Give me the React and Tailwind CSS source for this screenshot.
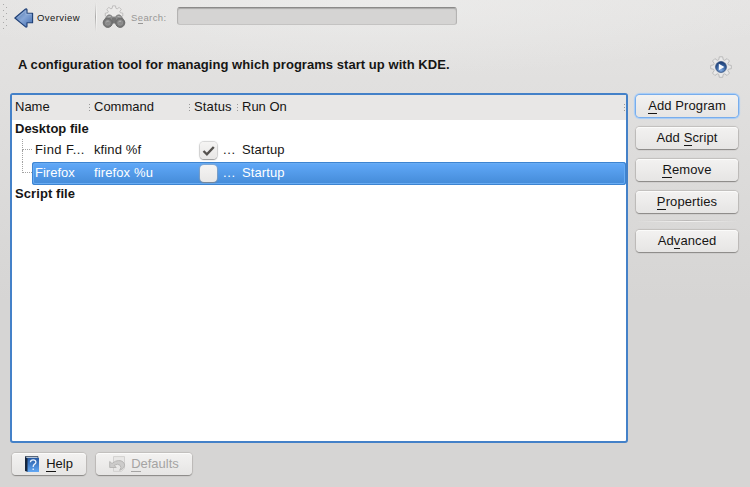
import React from 'react';

const raised =
  'flex items-center justify-center rounded-[4px] bg-gradient-to-b from-[#f3f2f1] to-[#e6e5e4] shadow-[0_1px_1px_#8a8886,0_0_1px_1px_#c0bebc,inset_0_1px_0_#fbfbfa]';

function Key({ children }) {
  return <span className="inline-block h-[15px] border-b border-current leading-[14px]">{children}</span>;
}

function SideButton({ before = '', hot, after, focused, className = '' }) {
  const look = focused
    ? 'flex items-center justify-center rounded-[4px] bg-gradient-to-b from-[#f3f2f1] to-[#e6e5e4] shadow-[0_0_0_1px_#78adec,0_0_1px_2px_#a4cbf8]'
    : raised;
  return (
    <button className={`${look} h-[22px] w-[102px] shrink-0 whitespace-pre leading-[15px] ${className}`}>
      <span className="tracking-[0.1px]">{before}<Key>{hot}</Key>{after}</span>
    </button>
  );
}

function Grip({ className = '' }) {
  return (
    <span className={`flex w-px shrink-0 flex-col gap-[2px] ${className}`}>
      <i className="h-px w-px bg-[#999]" />
      <i className="h-px w-px bg-[#999]" />
      <i className="h-px w-px bg-[#999]" />
    </span>
  );
}

function BackArrow() {
  return (
    <svg width="20" height="20" viewBox="0 0 20 20" className="shrink-0">
      <defs>
        <linearGradient id="arrow" x1="0" y1="0" x2="1" y2="1">
          <stop offset="0" stopColor="#44699f" />
          <stop offset=".5" stopColor="#86a6d6" />
          <stop offset="1" stopColor="#3d68ac" />
        </linearGradient>
      </defs>
      <path d="M.8 10 11.3 1.2c1-.7 1.700-.3 1.700.6v3.400h5.600v9.600H13v3.400c0 .9-.9 1.200-1.700.5z" fill="url(#arrow)" stroke="#1f3f75" strokeWidth="1.1" strokeLinejoin="round" />
      <path d="M3.500 9.600 11.800 2.800v3.500h5.500" fill="none" stroke="#9fb9e0" strokeWidth=".7" />
    </svg>
  );
}

const gearPath =
  'M9.300.8h3.400l.5 2.900 1.500.6 2.400-1.700 2.400 2.400-1.700 2.400.6 1.500 2.900.5v3.300l-2.900.5-.6 1.500 1.700 2.400-2.400 2.400-2.400-1.700-1.500.6-.5 2.900H9.300l-.5-2.900-1.500-.6-2.400 1.700-2.400-2.400 1.700-2.400-.6-1.500-2.900-.5V9.400l2.900-.5.6-1.500L2.500 5l2.400-2.400 2.400 1.700 1.500-.6z';

function SearchIcon() {
  return (
    <svg width="24" height="24" viewBox="0 0 24 24" className="shrink-0">
      <g transform="translate(2.700 .2) scale(.85)">
        <path d={gearPath} fill="#ecebea" stroke="#b3b2b1" strokeWidth=".9" strokeLinejoin="round" />
      </g>
      <path d="M3.500 13 6 10q3-1 4.500 2h3q1.500-3 4.500-2l2.500 3 2 5h-21z" fill="#8c8c8c" stroke="#777" strokeWidth=".7" />
      <path d="M5.500 12.300l3.300-1M15.500 11.300l3.300 1" stroke="#b5b5b5" strokeWidth="1.200" />
      <rect x="10" y="13" width="4" height="5" fill="#757575" />
      <circle cx="5.800" cy="17.800" r="4.600" fill="#777" stroke="#6c6c6c" />
      <circle cx="18.200" cy="17.800" r="4.600" fill="#777" stroke="#6c6c6c" />
      <circle cx="5.800" cy="17.800" r="2.500" fill="#8b8b8b" stroke="#999" strokeWidth=".7" />
      <circle cx="18.200" cy="17.800" r="2.500" fill="#8b8b8b" stroke="#999" strokeWidth=".7" />
      <path d="M4.300 17q1-1 2.300-.7M16.700 17q1-1 2.300-.7" fill="none" stroke="#b5b5b5" />
    </svg>
  );
}

function GearIcon() {
  return (
    <svg width="22" height="22" viewBox="0 0 22 22" className="shrink-0">
      <defs>
        <radialGradient id="orb" cx=".5" cy=".8" r=".8">
          <stop offset="0" stopColor="#84abe0" />
          <stop offset=".5" stopColor="#3c68a6" />
          <stop offset="1" stopColor="#17376d" />
        </radialGradient>
      </defs>
      <path d={gearPath} fill="#e9e9e9" stroke="#b5b5b5" strokeWidth=".9" strokeLinejoin="round" />
      <circle cx="11" cy="11" r="6.300" fill="#d0d3d8" />
      <circle cx="11" cy="11" r="5.400" fill="url(#orb)" stroke="#28477a" strokeWidth=".7" />
      <path d="M8.800 7.700v6.600l5.600-3.300z" fill="#f6f9fd" />
    </svg>
  );
}

function HelpIcon() {
  return (
    <svg width="14" height="16" viewBox="0 0 14 16" className="shrink-0">
      <defs>
        <linearGradient id="book" x1="0" y1="0" x2="0" y2="1">
          <stop offset="0" stopColor="#2559a4" />
          <stop offset="1" stopColor="#62a8f5" />
        </linearGradient>
      </defs>
      <path d="M0 .5h13v2H1z" fill="#b5c5d6" stroke="#24354d" strokeWidth=".7" />
      <path d="M0 1 3 2.500v13.500L0 15z" fill="#15253d" />
      <rect x="2.500" y="2" width="11.500" height="14" fill="url(#book)" />
      <path d="M5.400 6.300q.1-2.400 2.800-2.400 2.700 0 2.700 2.300 0 1.300-1.600 2.200-1.100.7-1.100 2.500M8.200 12.400v1.500" fill="none" stroke="#e8f1fc" strokeWidth="1.300" />
    </svg>
  );
}

function UndoIcon() {
  return (
    <svg width="17" height="16" viewBox="0 0 17 16" className="shrink-0">
      <path d="M4.500.6h11v11.500l-3 3.300h-8z" fill="#e8e7e6" stroke="#cfcecd" strokeWidth=".9" />
      <path d="M.7 5.500v6h6.500L5.200 9.400q3.500-2.300 5.800-.2 2 2.200-.3 5.100 5.700-2.500 4.800-6.300Q13 3 6.500 5.200L3 7.500z" fill="#cccbca" stroke="#b3b2b1" strokeWidth=".9" strokeLinejoin="round" />
    </svg>
  );
}

function CheckBox({ checked }) {
  return (
    <span className="flex h-[17px] w-[17px] shrink-0 items-center justify-center rounded-[4px] bg-gradient-to-b from-[#f5f4f3] to-[#e8e7e6] shadow-[0_1px_1px_#77777799,0_0_1px_1px_#aaaaaa80]">
      {checked && (
        <svg width="13" height="12" viewBox="0 0 13 12">
          <path d="M1.500 6 4.900 9.300 11.800 2" fill="none" stroke="#55524f" strokeWidth="2.400" />
        </svg>
      )}
    </span>
  );
}

function Row({ name, command, checked, selected, last }) {
  return (
    <div className="flex h-[23px] w-full">
      <div className="flex w-[20px] shrink-0 justify-end">
        <div className="flex w-[10px] flex-col">
          <div className="h-[11px] w-full border-b border-l border-dotted border-[#a3a3a3]" />
          {!last && <div className="h-[12px] w-full border-l border-dotted border-[#a3a3a3]" />}
        </div>
      </div>
      <div
        className={`flex min-w-0 grow items-center rounded-[3px] pl-[3px] ${
          selected
            ? 'bg-gradient-to-b from-[#62aafa] to-[#438ad7] text-white shadow-[inset_0_0_0_1px_#3d84d1,inset_0_0_0_2px_#69acf3]'
            : ''
        }`}
      >
        <span className={`w-[59px] shrink-0 whitespace-nowrap pb-[2px] ${selected ? '' : 'tracking-[0.4px]'}`}>{name}</span>
        <span className="w-[106px] shrink-0 pb-[2px] tracking-[0.12px]">{command}</span>
        <CheckBox checked={checked} />
        <span className="ml-[6px] w-[19px] shrink-0 pb-[2px] tracking-[0.7px]">...</span>
        <span className="pb-[2px] tracking-[0.1px]">Startup</span>
      </div>
    </div>
  );
}

export default function App() {
  return (
    <div className="flex h-[487px] w-[750px] flex-col overflow-hidden bg-[#d7d6d5] bg-[radial-gradient(ellipse_440px_75px_at_50%_0,#f0f0ef99,transparent),linear-gradient(to_bottom,#e5e4e3,#d6d5d4_300px)] font-['Liberation_Sans',sans-serif] text-[13px] leading-[15px] text-[#161514]">
      <header className="flex h-[33px] shrink-0 items-center pl-[3px] text-[9.5px]">
        <svg width="6" height="28" viewBox="0 0 6 28" className="shrink-0" fill="#aaa">
          <path d="M0 1h1v1H0zM0 7h1v1H0zM0 13h1v1H0zM0 19h1v1H0zM0 25h1v1H0zM3 4h1v1H3zM3 10h1v1H3zM3 16h1v1H3zM3 22h1v1H3z" />
        </svg>
        <div className="ml-[5px] mt-[3px]"><BackArrow /></div>
        <span className="ml-[3px] mt-px w-[45px] tracking-[0.42px]">Overview</span>
        <div className="ml-[13px] h-[30px] w-[2px] bg-gradient-to-b from-transparent via-[#f8f8f7] to-transparent">
          <div className="h-full w-px bg-gradient-to-b from-transparent via-[#aaa9a8] to-transparent" />
        </div>
        <div className="ml-[5px] mt-px"><SearchIcon /></div>
        <span className="ml-[5px] mt-px w-[46px] tracking-[0.4px] text-[#989796]">S<span className="inline-block h-[14px] border-b border-current">e</span>arch:</span>
        <div className="-mt-px h-[18px] w-[280px] rounded-[3px] border border-[#b4b3b2] border-t-[#8b8a89] border-b-[#c4c3c2] bg-[#d5d4d3] shadow-[inset_0_1px_1px_#aaa9a8]" />
      </header>
      <section className="flex h-[60px] shrink-0 items-center justify-between pl-[18px] pr-[18px]">
        <h1 className="mt-[2px] whitespace-nowrap text-[13px] font-bold tracking-[0.045px]">A configuration tool for managing which programs start up with KDE.</h1>
        <div className="mt-[8px]"><GearIcon /></div>
      </section>
      <main className="flex h-[350px] shrink-0 pl-[10px]">
        <div className="flex w-[618px] shrink-0 flex-col overflow-hidden rounded-[3px] border-2 border-[#4481c8] bg-white">
          <div className="flex h-[25px] shrink-0 items-center bg-[#e8e7e6] pl-[3px]">
            <span className="w-[74px] pb-[2px]">Name</span><Grip />
            <span className="ml-[4px] w-[95px] pb-[2px]">Command</span><Grip />
            <span className="ml-[4px] w-[43px] pb-[2px] tracking-[0.15px]">Status</span><Grip />
            <span className="ml-[4px] pb-[2px]">Run On</span><Grip className="ml-auto mr-px" />
          </div>
          <div className="flex h-[19px] shrink-0 items-center pb-[2px] pl-[3px] font-bold">Desktop file</div>
          <Row name="Find F..." command="kfind %f" checked />
          <Row name="Firefox" command="firefox %u" selected last />
          <div className="flex h-[18px] shrink-0 items-center pb-px pl-[3px] font-bold tracking-[0.08px]">Script file</div>
        </div>
        <aside className="flex flex-col pl-[8px] pt-[2px]">
          <SideButton hot="A" after="dd Program" focused />
          <SideButton before="Add " hot="S" after="cript" className="mt-[10px]" />
          <SideButton hot="R" after="emove" className="mt-[10px]" />
          <SideButton hot="P" after="roperties" className="mt-[10px]" />
          <div className="mt-[7px] h-[2px] w-[102px] shrink-0 bg-gradient-to-r from-transparent via-[#f2f1f0] to-transparent">
            <div className="h-px w-full bg-gradient-to-r from-transparent via-[#bbb9b8] to-transparent" />
          </div>
          <SideButton before="Ad" hot="v" after="anced" className="mt-[8px]" />
        </aside>
      </main>
      <footer className="flex gap-[10px] pl-[12px] pt-[10px]">
        <button className={`${raised} h-[22px] w-[74px]`}>
          <HelpIcon /><span className="ml-[7px]"><Key>H</Key>elp</span>
        </button>
        <button className={`${raised} h-[22px] w-[96px] text-[#a5a4a3]`}>
          <UndoIcon /><span className="ml-[5px]"><Key>D</Key>efaults</span>
        </button>
      </footer>
    </div>
  );
}
